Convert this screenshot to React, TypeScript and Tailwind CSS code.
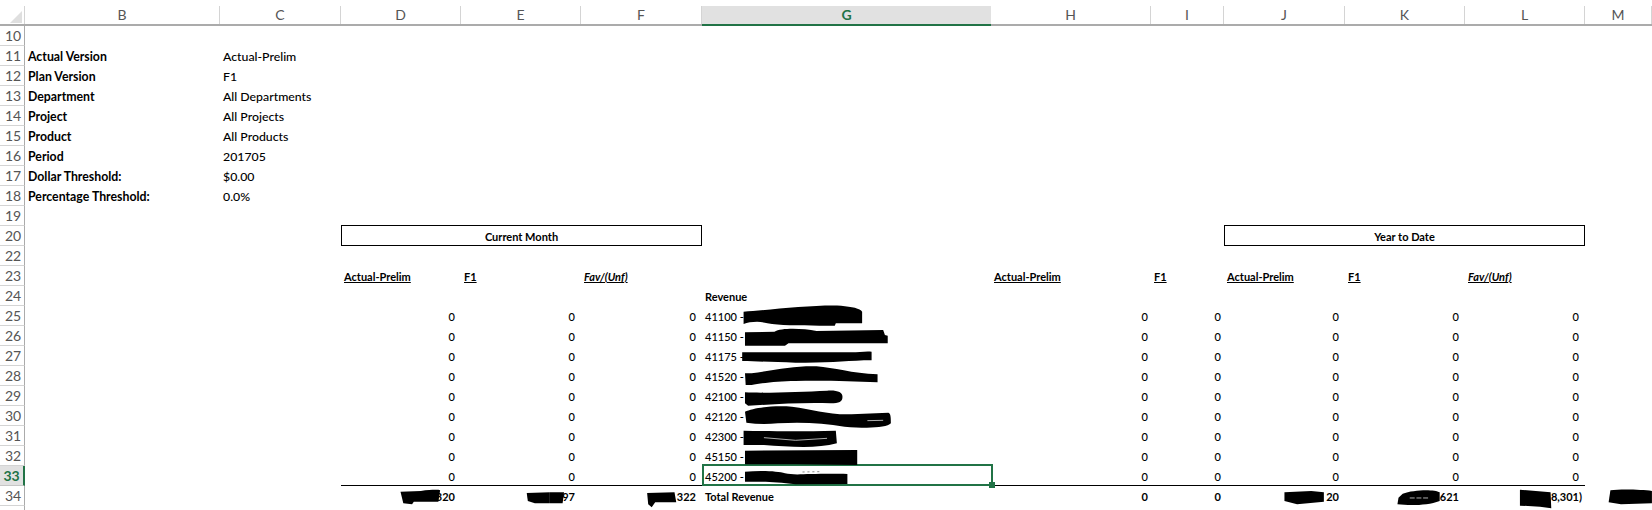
import React from 'react';

const template = 'grid-cols-[25px_195px_121px_120px_120px_121px_289px_160px_73px_121px_120px_120px_67px]';
const cols = 'grid h-5 grid-cols-[25px_195px_121px_120px_120px_121px_289px_160px_73px_121px_120px_120px_67px] leading-none text-black';
const infoRow = `${cols} text-[12.3px]`;
const tableRow = `${cols} text-[11px]`;

const columns = ['B', 'C', 'D', 'E', 'F', 'G', 'H', 'I', 'J', 'K', 'L', 'M'];

const RowNum: React.FC<{ n: number; active?: boolean }> = ({ n, active }) => (
  <div
    className={
      active
        ? 'flex items-center justify-center border-r-2 border-r-[#217346] border-b border-b-[#c6c6c6] bg-[#e1e1e1] text-[14px] font-bold text-[#217346]'
        : 'flex items-center justify-center border-r border-r-[#ababab] border-b border-b-[#d4d4d4] pl-[2px] text-[14px] text-[#555]'
    }
  >
    {n}
  </div>
);

const Num: React.FC<{ v?: string; bold?: boolean; line?: boolean; tight?: boolean }> = ({ v = '0', bold, line, tight }) => (
  <div
    className={`flex items-center justify-end pt-px ${tight ? 'pr-[3px]' : 'pr-[6px]'} ${bold ? 'font-bold' : 'font-medium'} ${line ? 'border-b border-black' : ''}`}
  >
    {v}
  </div>
);

const Head: React.FC<{ label: string; italic?: boolean }> = ({ label, italic }) => (
  <div className={`flex items-center pt-px pl-[3px] font-bold underline ${italic ? 'italic' : ''}`}>{label}</div>
);

const Info: React.FC<{ n: number; label: string; value: string }> = ({ n, label, value }) => (
  <div className={infoRow}>
    <RowNum n={n} />
    <div className="flex items-center pt-[3px] pl-[3px] font-bold">{label}</div>
    <div className="flex items-center pt-[3px] pl-[3px] font-medium">{value}</div>
  </div>
);

const Account: React.FC<{ n: number; code: string; selected?: boolean }> = ({ n, code, selected }) => (
  <div className={tableRow}>
    <RowNum n={n} active={selected} />
    <div />
    <div />
    <Num line={selected} />
    <Num line={selected} />
    <Num line={selected} />
    <div className={`relative flex items-center pt-px pl-[3px] font-medium ${selected ? 'border-b border-black' : ''}`}>
      {code} -
      {selected && (
        <>
          <div className="absolute top-[-2px] left-0 h-[22px] w-[291px] border-2 border-[#217346]" />
          <div className="absolute top-[16px] left-[287px] h-[6px] w-[6px] bg-[#217346]" />
        </>
      )}
    </div>
    <Num tight line={selected} />
    <Num tight line={selected} />
    <Num line={selected} />
    <Num line={selected} />
    <Num line={selected} />
  </div>
);

const info = [
  { n: 11, label: 'Actual Version', value: 'Actual-Prelim' },
  { n: 12, label: 'Plan Version', value: 'F1' },
  { n: 13, label: 'Department', value: 'All Departments' },
  { n: 14, label: 'Project', value: 'All Projects' },
  { n: 15, label: 'Product', value: 'All Products' },
  { n: 16, label: 'Period', value: '201705' },
  { n: 17, label: 'Dollar Threshold:', value: '$0.00' },
  { n: 18, label: 'Percentage Threshold:', value: '0.0%' },
];

const accounts = [
  { n: 25, code: '41100' },
  { n: 26, code: '41150' },
  { n: 27, code: '41175' },
  { n: 28, code: '41520' },
  { n: 29, code: '42100' },
  { n: 30, code: '42120' },
  { n: 31, code: '42300' },
  { n: 32, code: '45150' },
];

// black marker strokes over the account names and totals
const Redactions = () => (
  <svg className="pointer-events-none absolute top-0 left-0" width="1652" height="510" viewBox="0 0 1652 510">
    <g transform="translate(550 255) scale(0.3507 0.3333)" fill="#000">
      <path d="M552 170C620 165 760 148 830 152C860 155 885 160 890 170L890 205L815 205L812 212C740 212 660 213 620 205C600 198 570 200 552 207Z" />
      <path d="M556 232L640 230C660 218 720 220 760 228L950 225L955 240L963 242L963 265L680 265L670 272L556 272Z" />
      <path d="M548 292L860 292C880 292 900 288 917 290L917 316C850 316 800 325 700 323C640 320 590 320 548 318Z" />
      <path d="M556 355L575 355C640 345 700 332 760 334C810 338 860 355 934 358L934 382C860 380 800 376 700 378C650 378 600 385 575 390L558 390Z" />
      <path d="M556 412C620 415 720 410 790 407C820 405 834 412 834 425C834 440 825 445 800 445C720 442 640 448 565 452L556 445Z" />
      <path d="M556 470C580 458 640 450 690 455C750 462 790 480 860 478L965 473C972 475 972 490 972 505C960 520 900 520 840 515C780 505 720 500 650 505C620 508 590 508 560 503Z" />
      <path d="M552 527C620 528 700 530 815 527L818 565C760 582 680 575 610 570L552 570Z" />
      <path d="M556 587L876 585L876 630L700 628L556 628Z" />
      <path d="M556 650C600 646 650 648 670 655C700 662 730 655 848 657L848 687L700 688C640 680 600 680 556 680Z" />
      <path d="M277 714L355 712L360 742L300 742L290 757L280 748Z" />
      <path d="M0 712L40 712L36 745L0 745Z" />
    </g>
    <g transform="translate(550 255) scale(0.3507 0.3333)" stroke="#fff" strokeWidth="2" fill="none">
      <path d="M610 548L700 556L790 550" />
      <path d="M905 497L950 496" />
      <path d="M720 651L770 650" strokeDasharray="6 8" stroke="#555" />
    </g>
    <g transform="translate(0 255) scale(0.3507 0.3333)" fill="#000">
      <path d="M1142 710L1200 708C1230 704 1250 704 1255 706L1250 740L1180 740L1175 748L1150 745Z" />
      <path d="M1502 714L1568 712L1568 745L1525 745L1505 738Z" />
    </g>
    <g transform="translate(1100 255) scale(0.352 0.3333)" fill="#000">
      <path d="M524 712L600 708L636 712L636 740L560 748L524 738Z" />
      <path d="M860 716C890 704 950 702 965 712L965 738C930 752 880 752 845 748L848 728Z" />
      <path d="M1193 704L1280 712L1282 760L1250 755L1193 752Z" />
      <path d="M1450 706C1480 702 1540 704 1568 708L1568 745L1480 748L1445 742Z" />
    </g>
    <g transform="translate(1100 255) scale(0.352 0.3333)" stroke="#fff" strokeWidth="2" fill="none">
      <path d="M880 729L935 729" strokeDasharray="14 5" />
    </g>
  </svg>
);

export default function App() {
  return (
    <div className="relative h-[510px] w-[1652px] overflow-hidden bg-white pt-[6px] [font-family:Lato,'Open_Sans',sans-serif]">
      {/* column letters */}
      <div className={`grid h-5 ${template} border-b-2 border-b-[#ababab] text-[14px] leading-none text-[#555]`}>
        <div className="relative border-r border-r-[#d4d4d4]">
          <svg className="absolute top-[5px] left-[10px]" width="12" height="12" viewBox="0 0 12 12">
            <polygon points="12,0 12,12 0,12" fill="#dfdfdf" />
          </svg>
        </div>
        {columns.map((c) =>
          c === 'G' ? (
            <div key={c} className="-mb-[2px] flex items-center justify-center border-b-[2px] border-b-[#217346] bg-[#e1e1e1] font-bold text-[#217346]">
              {c}
            </div>
          ) : (
            <div key={c} className="flex items-center justify-center border-r border-r-[#d4d4d4]">
              {c}
            </div>
          ),
        )}
      </div>

      <div className={infoRow}>
        <RowNum n={10} />
      </div>
      {info.map((row) => (
        <Info key={row.n} {...row} />
      ))}
      <div className={infoRow}>
        <RowNum n={19} />
      </div>

      <div className={tableRow}>
        <RowNum n={20} />
        <div />
        <div />
        <div className="col-span-3 -mt-px flex h-[21px] items-center justify-center border border-black pt-[2px] font-bold">Current Month</div>
        <div />
        <div />
        <div />
        <div className="col-span-3 -mt-px flex h-[21px] items-center justify-center border border-black pt-[2px] font-bold">Year to Date</div>
      </div>
      <div className={tableRow}>
        <RowNum n={22} />
      </div>

      <div className={tableRow}>
        <RowNum n={23} />
        <div />
        <div />
        <Head label="Actual-Prelim" />
        <Head label="F1" />
        <Head label="Fav/(Unf)" italic />
        <div />
        <Head label="Actual-Prelim" />
        <Head label="F1" />
        <Head label="Actual-Prelim" />
        <Head label="F1" />
        <Head label="Fav/(Unf)" italic />
      </div>
      <div className={tableRow}>
        <RowNum n={24} />
        <div />
        <div />
        <div />
        <div />
        <div />
        <div className="flex items-center pt-px pl-[3px] font-bold">Revenue</div>
      </div>

      {accounts.map((row) => (
        <Account key={row.n} {...row} />
      ))}
      <Account n={33} code="45200" selected />

      <div className={tableRow}>
        <RowNum n={34} />
        <div />
        <div />
        <Num v="320" bold />
        <Num v="97" bold />
        <Num v="322" bold />
        <div className="flex items-center pt-px pl-[3px] font-bold">Total Revenue</div>
        <Num bold tight />
        <Num bold tight />
        <Num v="20" bold />
        <Num v="621" bold />
        <div className="flex items-center justify-end pt-px pr-[3px] font-bold">8,301)</div>
      </div>
      <div className={tableRow}>
        <div className="border-r border-r-[#ababab]" />
      </div>

      <Redactions />
    </div>
  );
}
